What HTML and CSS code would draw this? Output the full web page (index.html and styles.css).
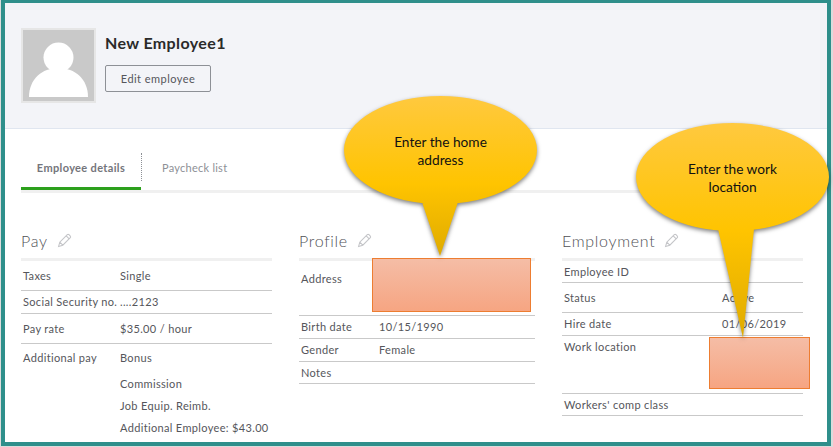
FILE: index.html
```html
<!DOCTYPE html>
<html lang="en">
<head>
<meta charset="utf-8">
<title>New Employee1</title>
<link rel="stylesheet" href="styles.css">
</head>
<body>
<svg class="defs" width="0" height="0" aria-hidden="true">
  <defs>
    <linearGradient id="gold-a" gradientUnits="userSpaceOnUse" x1="0" y1="0" x2="0" y2="160">
      <stop offset="0" stop-color="#ffc93f"/>
      <stop offset="0.55" stop-color="#ffc400"/>
      <stop offset="1" stop-color="#dfab00"/>
    </linearGradient>
    <linearGradient id="gold-b" gradientUnits="userSpaceOnUse" x1="0" y1="0" x2="0" y2="215">
      <stop offset="0" stop-color="#ffc93f"/>
      <stop offset="0.5" stop-color="#ffc400"/>
      <stop offset="1" stop-color="#dfab00"/>
    </linearGradient>
    <symbol id="pencil" viewBox="0 0 14 14">
      <path d="M1.5 12.5 L2.6 8.6 L9.6 1.6 Q10.4 0.9 11.2 1.6 L12.4 2.8 Q13.1 3.6 12.4 4.4 L5.4 11.4 Z M8.6 2.6 L11.4 5.4 M2.6 8.6 L5.4 11.4" fill="none" stroke="currentColor" stroke-width="1"/>
    </symbol>
  </defs>
</svg>

<main class="frame">
  <header class="head">
    <div class="avatar">
      <svg class="avatar-art" viewBox="0 0 71 71" aria-hidden="true">
        <circle cx="35.5" cy="27.5" r="15" fill="#fff"/>
        <path d="M6 67 C6 49 19 38 35.5 38 C52 38 65 49 65 67 Z" fill="#fff"/>
      </svg>
    </div>
    <div class="identity">
      <h1 class="name">New Employee1</h1>
      <button class="edit" type="button">Edit employee</button>
    </div>
  </header>

  <div class="body">
    <nav class="tabs">
      <a class="tab tab-active">Employee details</a>
      <a class="tab tab-idle">Paycheck list</a>
    </nav>

    <div class="columns">
      <section class="col col-pay">
        <h2 class="title">Pay <svg class="pen"><use href="#pencil"/></svg></h2>
        <div class="rows">
          <div class="row h30"><span>Taxes</span><span>Single</span></div>
          <div class="row h23"><span>Social Security no.</span><span>....2123</span></div>
          <div class="row h30"><span>Pay rate</span><span>$35.00 / hour</span></div>
          <div class="row row-list">
            <span>Additional pay</span>
            <ul class="list">
              <li>Bonus</li>
              <li>Commission</li>
              <li>Job Equip. Reimb.</li>
              <li>Additional Employee: $43.00</li>
            </ul>
          </div>
        </div>
      </section>

      <section class="col col-profile">
        <h2 class="title">Profile <svg class="pen"><use href="#pencil"/></svg></h2>
        <div class="rows">
          <div class="row row-top h55"><span>Address</span><span></span></div>
          <div class="row h23"><span>Birth date</span><span>10/15/1990</span></div>
          <div class="row h23"><span>Gender</span><span>Female</span></div>
          <div class="row h22"><span>Notes</span><span></span></div>
        </div>
      </section>

      <section class="col col-job">
        <h2 class="title">Employment <svg class="pen"><use href="#pencil"/></svg></h2>
        <div class="rows">
          <div class="row h22"><span>Employee ID</span><span></span></div>
          <div class="row h30"><span>Status</span><span>Active</span></div>
          <div class="row h23"><span>Hire date</span><span>01/06/2019</span></div>
          <div class="row row-work h58"><span>Work location</span><span></span></div>
          <div class="row h22"><span>Workers' comp class</span><span></span></div>
        </div>
      </section>
    </div>
  </div>
</main>

<div class="redact redact-home"></div>
<div class="redact redact-work"></div>

<div class="callout callout-home">
  <svg class="bubble" viewBox="0 0 193 160" aria-hidden="true">
    <path d="M0 54 A96.5 54 0 1 1 193 54 A96.5 54 0 1 1 0 54 Z M78 106 L114 106 L96 160 Z" fill="url(#gold-a)"/>
  </svg>
  <p class="say">Enter the home<br>address</p>
</div>
<div class="callout callout-work">
  <svg class="bubble" viewBox="0 0 193 215" aria-hidden="true">
    <path d="M0 54 A96.5 54 0 1 1 193 54 A96.5 54 0 1 1 0 54 Z M82 106 L118 106 L107 215 Z" fill="url(#gold-b)"/>
  </svg>
  <p class="say">Enter the work<br>location</p>
</div>
</body>
</html>
```

FILE: styles.css
```css
* { box-sizing: border-box; }

html, body { margin: 0; height: 447px; overflow: hidden; }

body {
  background: #dcdcdc;
  font-family: "Lato", "Liberation Sans", sans-serif;
  padding: 0 2px 1px 1px;
  color: #55565b;
}

.defs { position: absolute; }

.frame {
  height: 446px;
  border: 4px solid #2f8f8b;
  border-top-width: 3px;
  background: #fff;
  overflow: hidden;
}

.head {
  display: flex;
  gap: 9px;
  height: 126px;
  padding: 25px 16px;
  background: #f3f4f8;
  border-bottom: 1px solid #e0e6f0;
}

.avatar {
  width: 75px;
  height: 75px;
  border: 2px solid #e6e6e6;
  background: #c9c9c9;
}

.avatar-art { display: block; width: 71px; height: 71px; }

.identity { display: flex; flex-direction: column; align-items: flex-start; }

.name {
  margin: 5px 0 0;
  height: 32px;
  font-size: 16px;
  line-height: 20px;
  font-weight: 700;
  color: #2a2a2a;
  letter-spacing: 0.38px;
}

.edit {
  width: 106px;
  height: 27px;
  padding: 0;
  border: 1px solid #8d9096;
  border-radius: 2px;
  background: transparent;
  font: 11px "Lato", sans-serif;
  letter-spacing: 0.45px;
  color: #55565b;
}

.body { padding: 24px 24px 0 16px; }

.tabs {
  display: flex;
  height: 40px;
  border-bottom: 3px solid #f0f0f0;
}

.tab {
  height: 37px;
  padding-top: 7px;
  font-size: 11px;
  line-height: 16px;
  letter-spacing: 0.35px;
}

.tab-active {
  width: 120px;
  text-align: center;
  font-weight: 700;
  color: #74757b;
  border-bottom: 3px solid #2ca01c;
  position: relative;
}

.tab-active::after {
  content: "";
  position: absolute;
  right: -1px;
  top: 0;
  height: 28px;
  border-right: 1px dotted #8d9096;
}

.tab-idle { padding-left: 21px; color: #8d9096; letter-spacing: 0.25px; }

.columns {
  display: grid;
  grid-template-columns: 251px 236px 241px;
  gap: 27px;
  margin-top: 38px;
}

.title {
  display: flex;
  align-items: center;
  gap: 9px;
  height: 20px;
  margin: 0 0 7px;
  font-size: 16px;
  line-height: 20px;
  font-weight: 300;
  letter-spacing: 0.7px;
  color: #4f5055;
}

.pen { width: 15px; height: 15px; margin-top: -2px; color: #c4c5c8; }

.rows { border-top: 3px solid #f0f0f0; }

.row {
  display: grid;
  align-items: center;
  padding-left: 2px;
  border-bottom: 1px solid #c9c9c9;
  font-size: 11px;
  line-height: 16px;
  letter-spacing: 0.34px;
}

.col-pay .row { grid-template-columns: 97px 1fr; }
.col-profile .row { grid-template-columns: 78px 1fr; }
.col-job .row { grid-template-columns: 158px 1fr; }

.h22 { height: 22px; }
.h23 { height: 23px; }
.h30 { height: 30px; }
.h55 { height: 55px; }
.h58 { height: 58px; }

.row-top { align-items: start; padding-top: 10px; }
.row-work { align-items: start; padding-top: 3px; }

.row-list { align-items: start; padding-top: 6px; border-bottom: 0; }

.list { margin: 0; padding: 0; list-style: none; }
.list li:first-child { margin-bottom: 10px; }
.list li:nth-child(2) { margin-bottom: 6px; }
.list li:nth-child(3) { margin-bottom: 6px; }

.redact {
  position: absolute;
  border: 1px solid #ed7d31;
  background: linear-gradient(#f5bda6, #f6a582);
}

.redact-home { left: 372px; top: 258px; width: 159px; height: 54px; }
.redact-work { left: 709px; top: 337px; width: 101px; height: 52px; }

.callout { position: absolute; width: 193px; }
.callout-home { left: 344px; top: 96px; height: 160px; }
.callout-work { left: 636px; top: 123px; height: 215px; }

.bubble {
  position: absolute;
  inset: 0;
  width: 100%;
  height: 100%;
  overflow: visible;
  filter: drop-shadow(0 2px 2px rgba(0, 0, 0, 0.5));
}

.say {
  position: relative;
  margin: 0;
  padding-top: 37px;
  text-align: center;
  font-size: 13.7px;
  line-height: 18px;
  color: #111;
}
```
